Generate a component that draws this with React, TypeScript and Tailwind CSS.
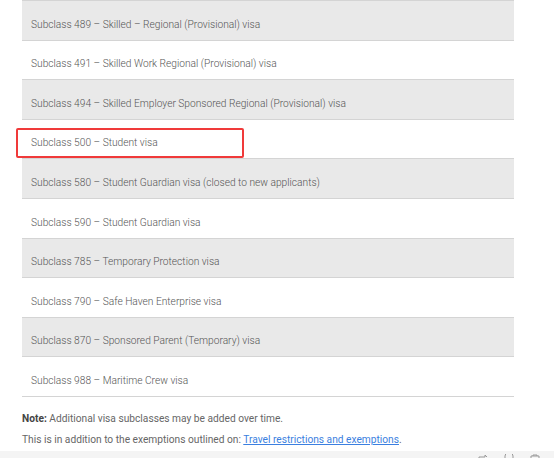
import React from "react";

const rows = [
  "Subclass 489 – Skilled – Regional (Provisional) visa",
  "Subclass 491 – Skilled Work Regional (Provisional) visa",
  "Subclass 494 – Skilled Employer Sponsored Regional (Provisional) visa",
  "Subclass 500 – Student visa",
  "Subclass 580 – Student Guardian visa (closed to new applicants)",
  "Subclass 590 – Student Guardian visa",
  "Subclass 785 – Temporary Protection visa",
  "Subclass 790 – Safe Haven Enterprise visa",
  "Subclass 870 – Sponsored Parent (Temporary) visa",
  "Subclass 988 – Maritime Crew visa",
];

export default function App() {
  return (
    <div
      className="w-[554px] h-[458px] overflow-hidden bg-white flex flex-col relative"
      style={{ fontFamily: "Roboto, 'Liberation Sans', sans-serif" }}
    >
      <div className="h-[2px] bg-[#ececec]" />
      <div className="h-[2px]" />
      <div className="ml-[22px] w-[492px] border-t border-[#d4d4d4]">
        {rows.map((r, i) => (
          <div
            key={i}
            className={`h-[39.6px] border-b border-[#d4d4d4] flex items-center pl-[9px] pt-[8px] text-[10.2px] font-light text-[#555] ${
              i % 2 === 0 ? "bg-[#e9e9e9]" : "bg-white"
            }`}
          >
            {r}
          </div>
        ))}
      </div>
      <div className="ml-[22px] mt-[15px] text-[10.2px] text-[#666] leading-[14px]">
        <span className="font-bold text-[#444]">Note:</span> Additional visa subclasses may be added over time.
      </div>
      <div className="ml-[22px] mt-[7px] text-[10.2px] text-[#666] leading-[14px]">
        This is in addition to the exemptions outlined on:{" "}
        <span className="text-[#3b7fe0] underline">Travel restrictions and exemptions</span>.
      </div>
      <div className="flex-1 mt-[4px] bg-[#f4f4f4] flex justify-end items-start gap-[16px] pr-[14px] pt-[3px]">
        <svg width="10" height="6" viewBox="0 0 10 6"><path d="M1 6V3h6V1l2 2" fill="none" stroke="#999" strokeWidth="1" /></svg>
        <svg width="10" height="6" viewBox="0 0 10 6"><path d="M1 6V2a2 2 0 0 1 8 0v4" fill="none" stroke="#999" strokeWidth="1" /></svg>
        <svg width="10" height="6" viewBox="0 0 10 6"><path d="M1 6V2h8v4M3 2V1h4v1" fill="none" stroke="#999" strokeWidth="1" /></svg>
      </div>
      <div className="absolute left-[16px] top-[128px] w-[228px] h-[30px] border-2 border-[#f03a3a] rounded-[2px]" />
    </div>
  );
}
